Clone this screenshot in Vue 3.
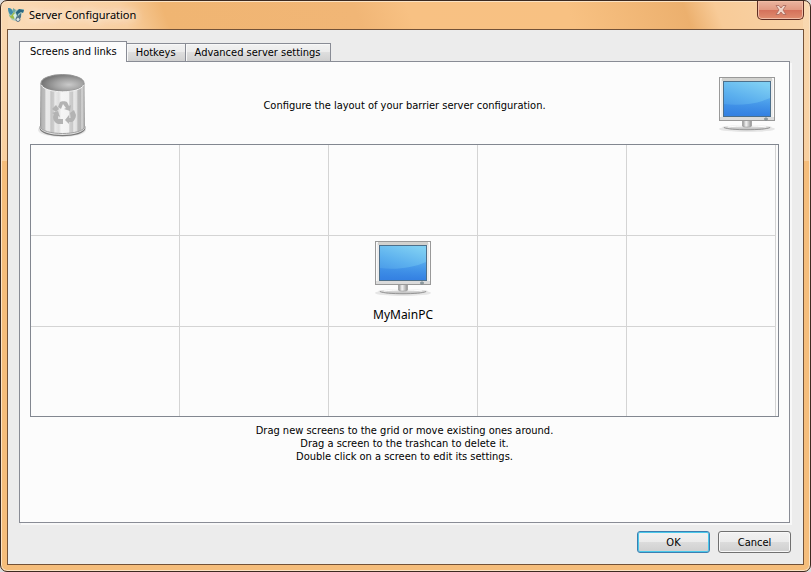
<template>
  <div class="window">
    <!-- shared drawings -->
    <svg class="defs" width="0" height="0" aria-hidden="true">
      <defs>
        <linearGradient id="screen-fill" x1="0.7" y1="0" x2="0.3" y2="1">
          <stop offset="0" stop-color="#7fcff3" />
          <stop offset="0.5" stop-color="#5cb0ee" />
          <stop offset="1" stop-color="#4190e6" />
        </linearGradient>
        <linearGradient id="screen-low" x1="0" y1="0" x2="0" y2="1">
          <stop offset="0" stop-color="#3b8fe8" stop-opacity="0.4" />
          <stop offset="1" stop-color="#3480e2" />
        </linearGradient>
        <linearGradient id="neck" x1="0" y1="0" x2="1" y2="0">
          <stop offset="0" stop-color="#8f8f8f" />
          <stop offset="0.4" stop-color="#f4f4f4" />
          <stop offset="1" stop-color="#8f8f8f" />
        </linearGradient>
        <linearGradient id="stand" x1="0" y1="0" x2="0" y2="1">
          <stop offset="0" stop-color="#fafafa" />
          <stop offset="1" stop-color="#b4b4b4" />
        </linearGradient>
        <linearGradient id="can-body" x1="0" y1="0" x2="1" y2="0">
          <stop offset="0" stop-color="#8a8a8a" />
          <stop offset="0.04" stop-color="#b4b4b4" />
          <stop offset="0.11" stop-color="#bdbdbd" />
          <stop offset="0.13" stop-color="#e9e9e9" />
          <stop offset="0.22" stop-color="#e6e6e6" />
          <stop offset="0.24" stop-color="#c4c4c4" />
          <stop offset="0.31" stop-color="#cdcdcd" />
          <stop offset="0.33" stop-color="#ebebeb" />
          <stop offset="0.42" stop-color="#dedede" />
          <stop offset="0.47" stop-color="#f5f5f5" />
          <stop offset="0.64" stop-color="#f2f2f2" />
          <stop offset="0.66" stop-color="#cfcfcf" />
          <stop offset="0.73" stop-color="#c8c8c8" />
          <stop offset="0.75" stop-color="#e9e9e9" />
          <stop offset="0.82" stop-color="#dedede" />
          <stop offset="0.84" stop-color="#bababa" />
          <stop offset="0.91" stop-color="#b4b4b4" />
          <stop offset="0.93" stop-color="#dadada" />
          <stop offset="1" stop-color="#989898" />
        </linearGradient>
        <radialGradient id="can-inside" cx="0.65" cy="0.6" r="0.65">
          <stop offset="0" stop-color="#cacaca" />
          <stop offset="0.5" stop-color="#a2a2a2" />
          <stop offset="1" stop-color="#737373" />
        </radialGradient>
      </defs>
      <symbol id="monitor" viewBox="0 0 64 64">
        <ellipse cx="32" cy="56" rx="28" ry="3" fill="#e6e6e6" />
        <path d="M7 54C15 51 49 51 57 54C53 58 11 58 7 54Z" fill="url(#stand)" />
        <path d="M9 54.5C14 57.5 50 57.5 55 54.5" fill="none" stroke="#969696" />
        <path d="M13 54C22 52.500 42 52.500 51 54" fill="none" stroke="#fff" />
        <path d="M27.500 47h9v6c0 1.500-9 1.500-9 0z" fill="url(#neck)" stroke="#9a9a9a" stroke-width="0.700" />
        <rect x="4.500" y="4.500" width="55" height="43" fill="#ececec" stroke="#999" />
        <path d="M5.500 46.500V5.500H58.500V46.500" fill="none" stroke="#fbfbfb" />
        <rect x="7" y="5" width="50" height="3" fill="#d2d2cf" />
        <rect x="5" y="44" width="54" height="3" fill="#dbdbdb" />
        <rect x="8.500" y="8.500" width="47" height="35" fill="url(#screen-fill)" stroke="#4d6f8a" />
        <path d="M9 31C24 33 42 31 55 25V43H9Z" fill="url(#screen-low)" />
        <ellipse cx="51" cy="46" rx="1.500" ry="1" fill="#b9c4c8" stroke="#75848a" />
      </symbol>
    </svg>

    <header class="title-bar">
      <svg class="app-icon" viewBox="0 0 16 16" aria-hidden="true">
        <path d="M0 1l4 1 2 2 2-1 4-1h4v3l-2 1-1 4-2 4h-3l-4-1-3-4z" fill="#a9c8bd" />
        <path d="M0 1c3 0 5 2 5 5L3 8C1 7 0 4 0 1z" fill="#3f8ba8" />
        <path d="M5 1l3 2-2 3-1-1z" fill="#6fa8a0" />
        <path d="M1 8l2 1 3-4 1 3-1 4-3-1z" fill="#9dbb45" />
        <path d="M8 5l3-3 5 1-1 3-2-1-3 2-1 4-2-1z" fill="#286580" />
        <path d="M5 8l3-2 1 3-2 3z" fill="#d6ece2" />
        <path d="M9 10l4-4v4l-2 3-3-1z" fill="#4d7286" />
        <circle cx="10" cy="12.500" r="2" fill="#dfe7e8" stroke="#607785" />
      </svg>
      <h1>Server Configuration</h1>
      <button class="close" type="button" aria-label="Close">
        <svg viewBox="0 0 12 10" aria-hidden="true">
          <path d="M1 0.500h3L6 3l2-2.500h3L8 5l3 4.500H8L6 7 4 9.500H1L4 5z" fill="#f0d5c9" stroke="#a8675a" stroke-width="0.800" />
        </svg>
      </button>
    </header>

    <main class="client">
      <div class="tabs" role="tablist">
        <button
          v-for="tab in tabs"
          :key="tab"
          type="button"
          role="tab"
          class="tab"
          :class="{ active: tab === activeTab }"
          :aria-selected="tab === activeTab"
          @click="activeTab = tab"
        >{{ tab }}</button>
      </div>

      <section class="pane" role="tabpanel" :aria-label="activeTab">
        <template v-if="activeTab === tabs[0]">
          <div class="toolbox">
            <svg class="icon" viewBox="0 0 64 64" role="img" aria-label="Trashcan">
              <ellipse cx="32" cy="57" rx="24" ry="7" fill="#e6e6e6" />
              <path d="M9.500 53c0 12 46 12 46 0v2c0 11-46 11-46 0z" fill="#7c7c7c" />
              <path d="M10.500 10L10 53c1 10 44 10 45 0L54.500 10z" fill="url(#can-body)" />
              <path d="M10 53c1 10 44 10 45 0" fill="none" stroke="#a0a0a0" />
              <ellipse cx="32.500" cy="10" rx="21.500" ry="8.500" fill="url(#can-inside)" stroke="#949494" />
              <path d="M11.500 12c3 9 39 9 42 0" fill="none" stroke="#f2f2f2" />
              <!-- recycling arrows -->
              <g fill="#b3b3b3">
                <path d="M28 34l2-5c1-1 6-1 7 0l2 4 2-1-1 6-6-2 2-1-3-4-2 5z" />
                <path d="M40 40l4-3 2 5c0 3-2 6-4 7h-3v2l-4-4 4-5v3h2z" />
                <path d="M33 46v5h-5c-3-1-5-4-5-7l1-3-2-1 6-2 2 6-2-1v3z" />
                <path d="M22 36l4-4 3 4-3 3z" />
              </g>
            </svg>
            <p>Configure the layout of your barrier server configuration.</p>
            <svg class="icon" role="img" aria-label="New screen"><use href="#monitor" /></svg>
          </div>

          <div class="grid">
            <div v-for="(name, i) in cells" :key="i" class="cell">
              <template v-if="name">
                <svg class="icon" aria-hidden="true"><use href="#monitor" /></svg>
                <span>{{ name }}</span>
              </template>
            </div>
          </div>

          <p class="hints">
            Drag new screens to the grid or move existing ones around.<br />
            Drag a screen to the trashcan to delete it.<br />
            Double click on a screen to edit its settings.
          </p>
        </template>
      </section>

      <footer class="buttons">
        <button type="button" class="push default">OK</button>
        <button type="button" class="push">Cancel</button>
      </footer>
    </main>
  </div>
</template>

<script setup>
import { ref } from 'vue'

const tabs = ['Screens and links', 'Hotkeys', 'Advanced server settings']
const activeTab = ref(tabs[0])

// 5 x 3 grid, the server sits in the middle
const cells = ref(Array(15).fill(''))
cells.value[7] = 'MyMainPC'
</script>

<style>
body {
  background: #ddd;
}
</style>

<style scoped>
.window {
  box-sizing: border-box;
  display: flex;
  flex-direction: column;
  min-height: 100vh;
  padding: 0 6px 6px;
  border: 1px solid #3c2a20;
  border-radius: 7px;
  box-shadow: inset 0 0 0 1px #fbe3c5;
  background:
    linear-gradient(#fad9b3, #fad0a0) left top / 7px 160px no-repeat,
    linear-gradient(#f9d9b2, #f8cf9f) right top / 7px 160px no-repeat,
    linear-gradient(70deg, #fbdcb9 0, #f8cfa0 120px, #f0b572 160px, #f1b676 340px, #f8c183 390px, #f8c182 540px, #ecb06e 650px, #f8cb98 680px, #f8d3a8 100%) left top / 100% 30px no-repeat,
    #f5bd7b;
  font: 11px/13px Tahoma, "DejaVu Sans Condensed", "DejaVu Sans", sans-serif;
  color: #000;
}

.defs {
  position: absolute;
}

.title-bar {
  display: flex;
  align-items: center;
  height: 28px;
}

.app-icon {
  width: 16px;
  height: 16px;
  margin: 0 5px 0 1px;
}

h1 {
  flex: 1;
  margin: 0;
  font: 11px/16px "Segoe UI", "Noto Sans", sans-serif;
  text-shadow: 0 0 8px #fff, 0 0 12px #fff;
}

.close {
  display: flex;
  align-items: center;
  justify-content: center;
  align-self: flex-start;
  width: 47px;
  height: 19px;
  padding: 0;
  border: 1px solid #5e2d23;
  border-top: 0;
  border-radius: 0 0 5px 5px;
  box-shadow: inset 0 0 0 1px #f2bda6;
  background: linear-gradient(#eab5a0, #e29a82 48%, #d4705a 50%, #e08e70);
}

.close svg {
  width: 12px;
  height: 10px;
}

.client {
  display: flex;
  flex: 1;
  flex-direction: column;
  padding: 11px 12px 11px 11px;
  border: 1px solid #735238;
  background: #ececec;
}

.tabs {
  display: flex;
  align-items: flex-end;
}

.tab {
  height: 18px;
  padding: 0 9px;
  border: 1px solid #898c95;
  border-width: 1px 1px 0 0;
  box-shadow: inset 1px 1px #f8f8f8;
  background: linear-gradient(#f2f2f2, #ebebeb 48%, #dedede 50%, #d0d0d0);
  font: inherit;
  color: inherit;
}

.tab.active {
  position: relative;
  height: 21px;
  margin-bottom: -1px;
  padding: 0 9px 1px 10px;
  border-left-width: 1px;
  box-shadow: none;
  background: #fcfcfc;
}

.pane {
  flex: 1;
  margin-right: 1px;
  padding: 11px 10px 10px;
  border: 1px solid #898c95;
  box-shadow: 2px 2px #f8f8f8;
  background: #fcfcfc;
}

.toolbox {
  display: flex;
  align-items: center;
  justify-content: space-between;
  margin-bottom: 7px;
}

.toolbox p {
  margin: 0;
}

.icon {
  display: block;
  width: 64px;
  height: 64px;
}

.grid {
  display: grid;
  grid-template-columns: repeat(5, 1fr);
  grid-template-rows: 91px 91px 89px;
  padding-right: 2px;
  border: 1px solid #828790;
}

.cell {
  display: flex;
  flex-direction: column;
  align-items: center;
  padding-top: 1px;
  border-right: 1px solid #d4d4d4;
  border-bottom: 1px solid #d4d4d4;
  font: 12px/16px "Segoe UI", "Noto Sans", sans-serif;
}

.cell span {
  margin-top: 6px;
}

.cell:nth-child(n + 11) {
  border-bottom: 0;
}

.hints {
  margin: 7px 0 0;
  text-align: center;
}

.buttons {
  display: flex;
  justify-content: flex-end;
  gap: 8px;
  margin-top: 8px;
}

.push {
  width: 73px;
  height: 22px;
  padding: 0;
  border: 1px solid #707070;
  border-radius: 3px;
  box-shadow: inset 0 0 0 1px #f8f8f8;
  background: linear-gradient(#f2f2f2, #ebebeb 48%, #dcdcdc 50%, #cfcfcf);
  font: inherit;
  color: inherit;
}

.push.default {
  border-color: #3c7fb1;
  box-shadow: inset 0 0 0 1px #4bc8ea;
}
</style>
